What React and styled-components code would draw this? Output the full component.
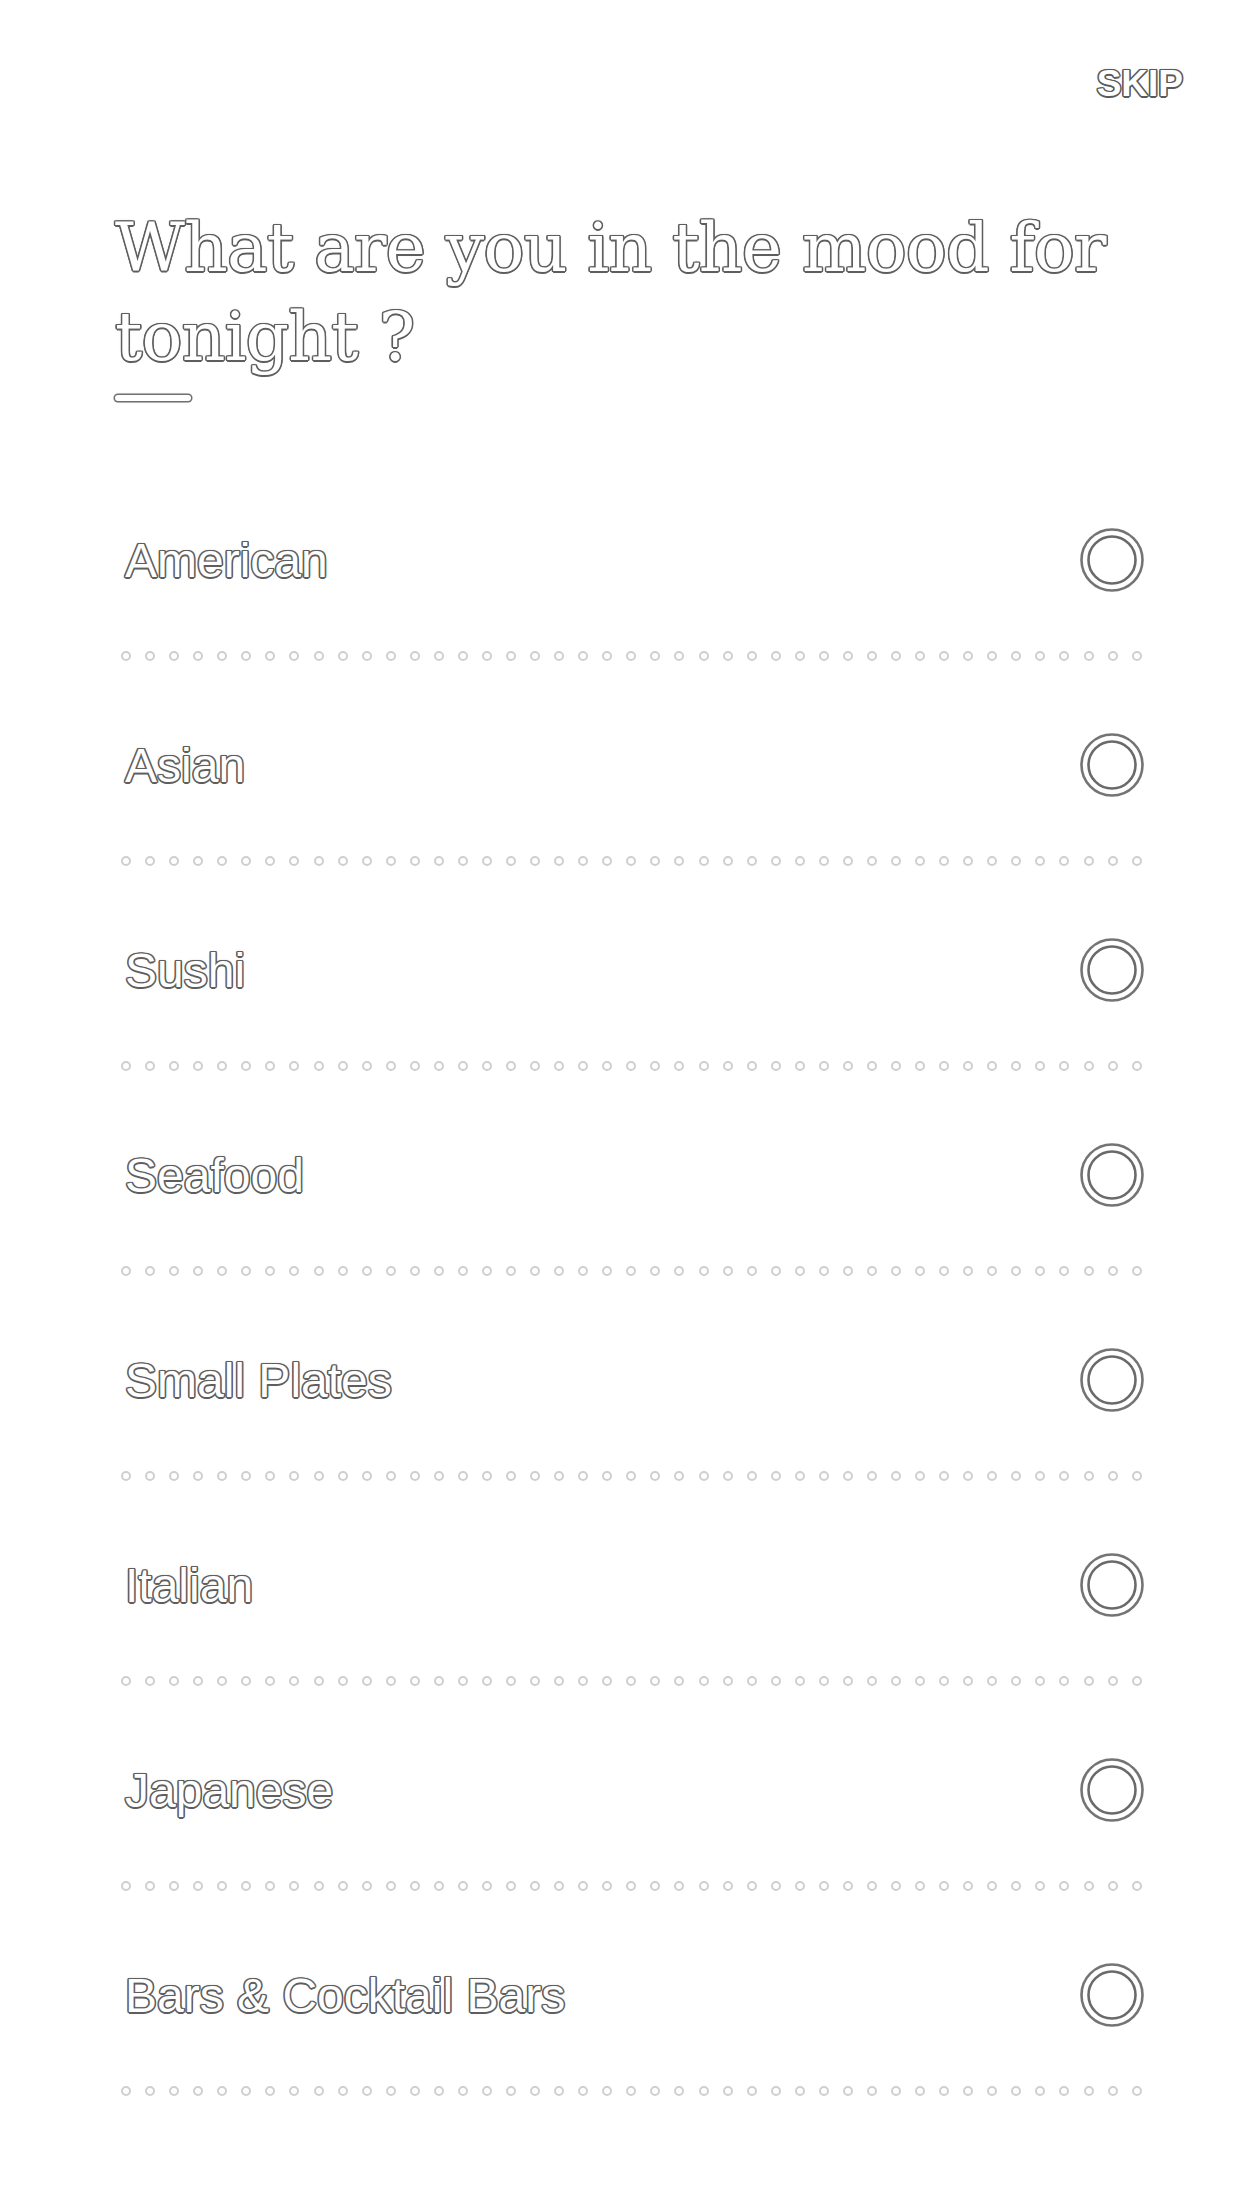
import React from "react";
import styled, { createGlobalStyle, css } from "styled-components";

const Global = createGlobalStyle`
  html, body { margin: 0; padding: 0; background: #ffffff; }
  body { font-family: "Liberation Sans", Arial, sans-serif; }
`;

const outlined = (c = "#6a6a6a") => css`
  color: #ffffff;
  text-shadow:
    -1.5px 0 0 ${c}, 1.5px 0 0 ${c}, 0 -1.5px 0 ${c}, 0 1.5px 0 ${c},
    -1.2px -1.2px 0 ${c}, 1.2px -1.2px 0 ${c}, -1.2px 1.2px 0 ${c}, 1.2px 1.2px 0 ${c},
    0 0 3px #a8a8a8;
`;

const Page = styled.div`
  width: 1242px;
  min-height: 2208px;
  box-sizing: border-box;
  background: #fff;
  display: flex;
  flex-direction: column;
`;

const TopBar = styled.div`
  display: flex;
  justify-content: flex-end;
  padding: 63px 59px 0 0;
`;

const Skip = styled.button`
  border: none;
  background: none;
  padding: 0;
  font-family: "Liberation Sans", Arial, sans-serif;
  font-weight: 700;
  font-size: 37px;
  line-height: 42px;
  ${outlined("#5a5a5a")}
`;

const Header = styled.div`
  padding: 98px 0 0 115px;
  display: flex;
  flex-direction: column;
`;

const Title = styled.h1`
  margin: 0;
  font-family: "DejaVu Serif", "Liberation Serif", serif;
  font-weight: 400;
  font-size: 68px;
  line-height: 89px;
  letter-spacing: -0.8px;
  max-width: 1060px;
  ${outlined("#5e5e5e")}
`;

const Bar = styled.div`
  margin-top: 14px;
  width: 76px;
  height: 6px;
  border-radius: 4px;
  background: #fff;
  box-shadow: 0 0 0 1.5px #707070, 0 0 3px #a8a8a8;
`;

const List = styled.ul`
  list-style: none;
  margin: 114px 0 0 0;
  padding: 0 97px 0 121px;
`;

const Item = styled.li`
  display: flex;
  flex-direction: column;
`;

const ItemRow = styled.label`
  height: 90px;
  display: flex;
  align-items: center;
  justify-content: space-between;
`;

const Label = styled.span`
  padding-left: 4px;
  font-family: "Liberation Sans", Arial, sans-serif;
  font-size: 48px;
  ${outlined("#5e5e5e")}
`;

const Radio = styled.span`
  display: block;
  width: 66px;
  height: 66px;
  svg { display: block; }
`;

const Dots = styled.div`
  margin: 46px 3px 59px 0;
  height: 10px;
  display: flex;
  justify-content: space-between;
`;

const Dot = styled.span`
  width: 10px;
  height: 10px;
  box-sizing: border-box;
  border-radius: 50%;
  border: 2px solid #cfcfcf;
`;

const items = [
  "American",
  "Asian",
  "Sushi",
  "Seafood",
  "Small Plates",
  "Italian",
  "Japanese",
  "Bars & Cocktail Bars",
];

const dots = Array.from({ length: 43 }, (_, i) => i);

const RadioIcon = () => (
  <svg width="66" height="66" viewBox="0 0 66 66">
    <circle cx="33" cy="33" r="30.5" fill="none" stroke="#747474" strokeWidth="2.6" />
    <circle cx="33" cy="33" r="23.5" fill="none" stroke="#6a6a6a" strokeWidth="2.6" />
  </svg>
);

export default function App() {
  return (
    <Page>
      <Global />
      <TopBar>
        <Skip>SKIP</Skip>
      </TopBar>
      <Header>
        <Title>What are you in the mood for tonight ?</Title>
        <Bar />
      </Header>
      <List>
        {items.map((name) => (
          <Item key={name}>
            <ItemRow>
              <Label>{name}</Label>
              <Radio>
                <RadioIcon />
              </Radio>
            </ItemRow>
            <Dots>
              {dots.map((d) => (
                <Dot key={d} />
              ))}
            </Dots>
          </Item>
        ))}
      </List>
    </Page>
  );
}
